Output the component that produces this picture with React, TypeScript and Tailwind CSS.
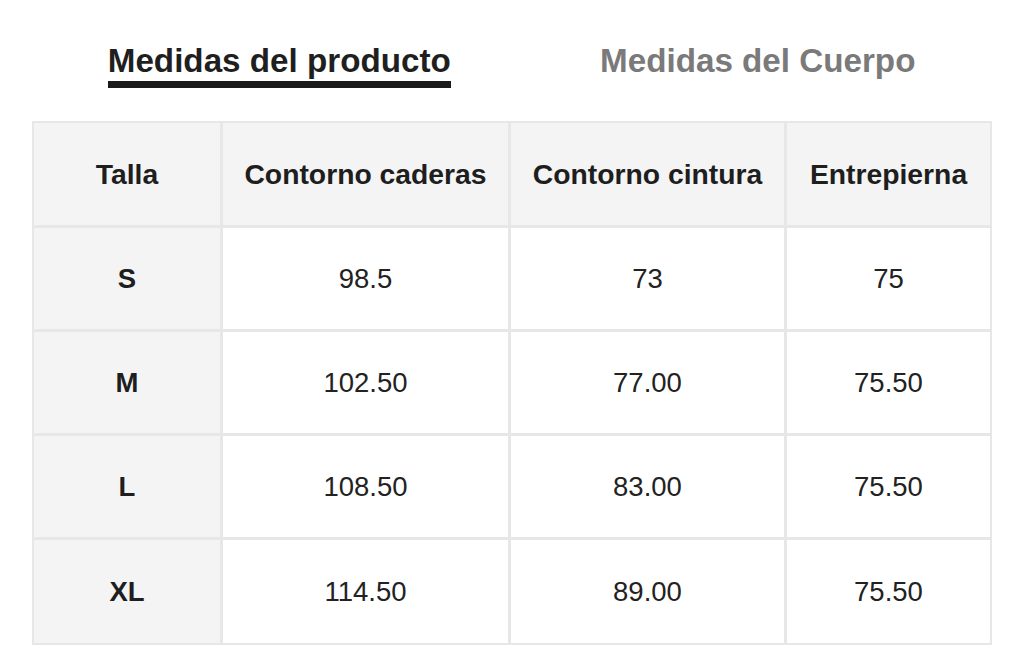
import React from 'react';

interface SizeRow {
  size: string;
  hips: string;
  waist: string;
  inseam: string;
}

const rows: SizeRow[] = [
  { size: 'S', hips: '98.5', waist: '73', inseam: '75' },
  { size: 'M', hips: '102.50', waist: '77.00', inseam: '75.50' },
  { size: 'L', hips: '108.50', waist: '83.00', inseam: '75.50' },
  { size: 'XL', hips: '114.50', waist: '89.00', inseam: '75.50' },
];

const headers = ['Talla', 'Contorno caderas', 'Contorno cintura', 'Entrepierna'];

export default function App() {
  return (
    <div
      className="min-h-screen w-[1024px] h-[668px] bg-white text-[#222]"
      style={{ fontFamily: '"Liberation Sans", Arial, sans-serif' }}
    >
      {/* Tabs */}
      <div className="flex w-[957px] ml-[40px] pt-[42px] mb-[33px]">
        <div className="flex-1 flex justify-center">
          <div className="flex flex-col">
            <span className="text-[33.2px] leading-[38px] font-bold text-[#1f1f1f]">Medidas del producto</span>
            <div className="mt-[1px] h-[7px] bg-[#1a1a1a]"></div>
          </div>
        </div>
        <div className="flex-1 flex justify-center">
          <div className="flex flex-col">
            <span className="text-[33.2px] leading-[38px] font-bold text-[#7a7a7a]">Medidas del Cuerpo</span>
            <div className="mt-[1px] h-[7px]"></div>
          </div>
        </div>
      </div>

      {/* Size table */}
      <div className="ml-[32px] w-fit p-[2px] bg-[#e7e7e7] grid grid-cols-[186px_285px_273px_203px] grid-rows-[102px_101px_101px_101px_103px] gap-[3px]">
        {headers.map((h) => (
          <div key={h} className="bg-[#f4f4f4] flex items-center justify-center text-[28.3px] font-bold text-[#1e1e1e]">
            {h}
          </div>
        ))}
        {rows.map((r) => (
          <React.Fragment key={r.size}>
            <div className="bg-[#f4f4f4] flex items-center justify-center text-[27.5px] font-bold text-[#1e1e1e]">{r.size}</div>
            <div className="bg-white flex items-center justify-center text-[27.5px]">{r.hips}</div>
            <div className="bg-white flex items-center justify-center text-[27.5px]">{r.waist}</div>
            <div className="bg-white flex items-center justify-center text-[27.5px]">{r.inseam}</div>
          </React.Fragment>
        ))}
      </div>
    </div>
  );
}
